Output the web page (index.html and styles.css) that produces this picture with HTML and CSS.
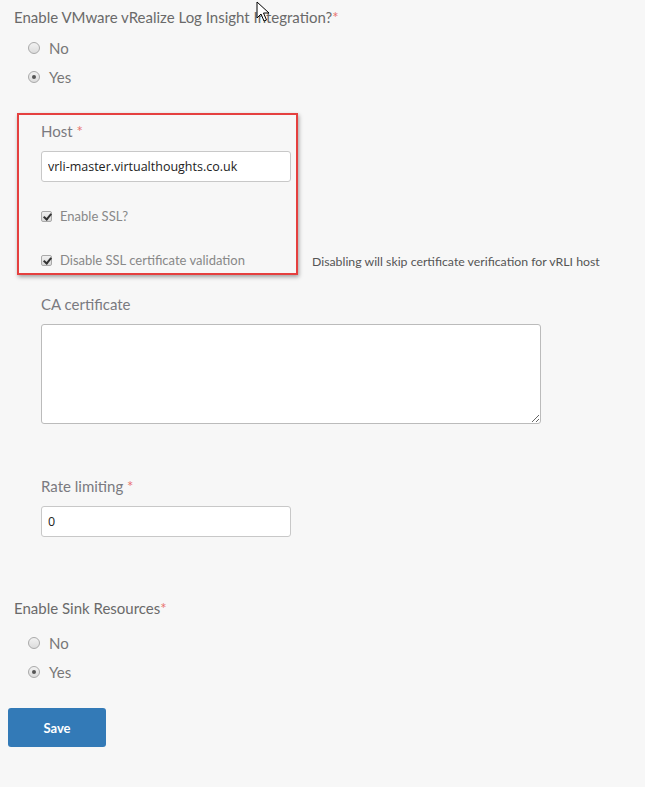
FILE: index.html
```html
<!DOCTYPE html>
<html lang="en">
<head>
  <meta charset="UTF-8">
  <title>Log Insight Integration</title>
  <link rel="stylesheet" href="styles.css">
</head>
<body>
  <form class="settings">
    <!-- vRLI toggle -->
    <div class="question">Enable VMware vRealize Log Insight Integration?<span class="req">*</span></div>
    <div class="radios">
      <label class="radio"><input type="radio" name="vrli"> No</label>
      <label class="radio"><input type="radio" name="vrli" checked> Yes</label>
    </div>

    <div class="sub">
      <div class="host-box">
        <label class="field-label" for="host">Host <span class="req">*</span></label>
        <input class="text-input" type="text" id="host" value="vrli-master.virtualthoughts.co.uk">

        <label class="check check-ssl"><input type="checkbox" checked> Enable SSL?</label>
        <label class="check check-validate"><input type="checkbox" checked> Disable SSL certificate validation</label>
      </div>
      <span class="help">Disabling will skip certificate verification for vRLI host</span>
    </div>

    <div class="indent">
      <label class="field-label" for="ca">CA certificate</label>
      <textarea id="ca" class="ca-text"></textarea>

      <label class="field-label rate-label" for="rate">Rate limiting <span class="req">*</span></label>
      <input class="text-input" type="text" id="rate" value="0">
    </div>

    <!-- sink toggle -->
    <div class="question sink">Enable Sink Resources<span class="req">*</span></div>
    <div class="radios sink-radios">
      <label class="radio"><input type="radio" name="sink"> No</label>
      <label class="radio"><input type="radio" name="sink" checked> Yes</label>
    </div>

    <button type="button" class="save">Save</button>
  </form>

  <svg class="cursor" width="14" height="22" viewBox="0 0 14 22">
    <path d="M1 1 L1 17 L5 13 L8 20 L10.5 19 L7.5 12 L13 12 Z" fill="#fff" stroke="#000" stroke-width="1"/>
  </svg>
</body>
</html>
```

FILE: styles.css
```css
body {
  margin: 0;
  background-color: #f7f7f7;
  font-family: Lato, "Open Sans", sans-serif;
  color: #666;
  position: relative;
}
.settings {
  padding: 7px 0 0 14px;
}
.question {
  font-size: 15px;
  color: #6a6a6a;
  line-height: 20px;
}
.req {
  color: #e9746f;
}
.radios {
  padding: 6px 0 0 14px;
}
.sink-radios {
  padding-top: 10px;
}
.radio {
  display: flex;
  align-items: center;
  font-size: 15px;
  color: #777;
  height: 29px;
}
/* grey native-looking radio */
.radio input {
  appearance: none;
  -webkit-appearance: none;
  margin: 0 9px 0 0;
  width: 12px;
  height: 12px;
  border: 1px solid #a9a9a9;
  border-radius: 50%;
  background: linear-gradient(#f2f2f2, #dcdcdc);
  position: relative;
}
.radio input:checked::before {
  content: "";
  position: absolute;
  left: 3px;
  top: 3px;
  width: 4px;
  height: 4px;
  border-radius: 50%;
  background: #555;
}
.sub {
  display: flex;
  align-items: flex-end;
  margin-top: 22px;
}
.host-box {
  margin-left: 3px;
  width: 255px;
  padding: 6px 0 3px 22px;
  border: 2px solid #e5403f;
  box-shadow: 1px 2px 4px rgba(0, 0, 0, 0.35);
  display: flex;
  flex-direction: column;
}
.field-label {
  font-size: 15px;
  color: #7a7a80;
  line-height: 20px;
  display: block;
}
.text-input {
  box-sizing: border-box;
  width: 250px;
  height: 31px;
  margin-top: 10px;
  padding: 0 6px;
  border: 1px solid #c8c8c8;
  border-radius: 3px;
  background: #fff;
  font-family: "Open Sans", sans-serif;
  font-size: 12.5px;
  color: #222;
}
.check {
  display: flex;
  align-items: center;
  font-size: 13px;
  color: #888;
  height: 20px;
}
/* grey checkbox with a dark tick */
.check input {
  appearance: none;
  -webkit-appearance: none;
  margin: 0 8px 0 0;
  width: 11px;
  height: 11px;
  border: 1px solid #a9a9a9;
  border-radius: 2px;
  background: linear-gradient(#f0f0f0, #d8d8d8);
  position: relative;
}
.check input:checked::before {
  content: "";
  position: absolute;
  left: 3px;
  top: 0;
  width: 3px;
  height: 6px;
  border: solid #333;
  border-width: 0 2px 2px 0;
  transform: rotate(40deg);
}
.check-ssl {
  margin-top: 24px;
}
.check-validate {
  margin-top: 24px;
}
.help {
  font-size: 12.3px;
  color: #555;
  margin: 0 0 6px 14px;
}
.indent {
  padding-left: 27px;
  margin-top: 19px;
}
.ca-text {
  display: block;
  box-sizing: border-box;
  width: 500px;
  height: 100px;
  margin-top: 10px;
  border: 1px solid #bbb;
  border-radius: 3px;
  background: #fff;
}
.rate-label {
  margin-top: 52px;
}
.sink {
  margin-top: 61px;
}
.save {
  display: block;
  margin: 22px 0 0 -6px;
  width: 98px;
  height: 39px;
  background-color: #337ab7;
  color: #fff;
  font-family: Lato, sans-serif;
  font-weight: bold;
  font-size: 13px;
  border: none;
  border-radius: 3px;
}
.cursor {
  position: absolute;
  left: 256px;
  top: 1px;
}
```
